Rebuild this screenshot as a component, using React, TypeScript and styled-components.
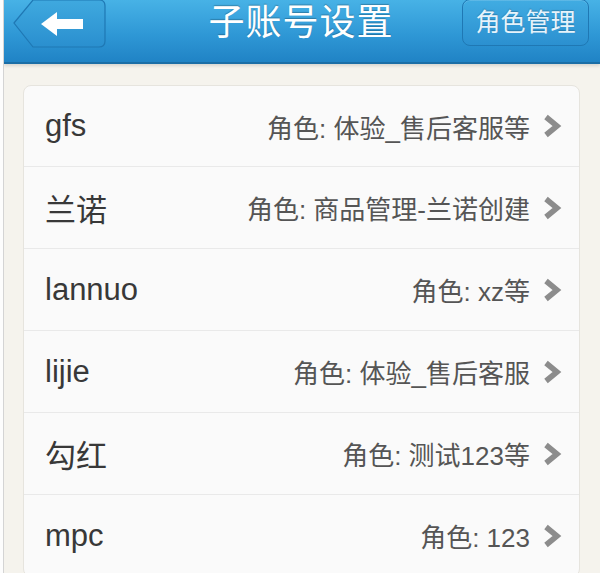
import React from 'react';
import styled, { createGlobalStyle } from 'styled-components';

const GlobalStyle = createGlobalStyle`
  html, body {
    margin: 0;
    padding: 0;
    background: #fdfdfd;
  }
  body {
    font-family: "Liberation Sans", Arial, "Noto Sans CJK SC", sans-serif;
  }
`;

const accounts = [
  { name: 'gfs', role: '角色: 体验_售后客服等' },
  { name: '兰诺', role: '角色: 商品管理-兰诺创建' },
  { name: 'lannuo', role: '角色: xz等' },
  { name: 'lijie', role: '角色: 体验_售后客服' },
  { name: '勾红', role: '角色: 测试123等' },
  { name: 'mpc', role: '角色: 123' },
];

function BackArrow() {
  return (
    <svg width='94' height='50' viewBox='0 0 94 50'>
      <defs>
        <linearGradient id='backFill' x1='0' y1='0' x2='0' y2='1'>
          <stop offset='0' stopColor='#3fa9df' />
          <stop offset='1' stopColor='#2a8fcf' />
        </linearGradient>
      </defs>
      <path
        d='M1 24 L20 1 L86 1 Q92 1 92 7 L92 42 Q92 48 86 48 L20 48 Z'
        fill='url(#backFill)'
        stroke='#1f78b4'
        strokeWidth='1.2'
      />
      <path d='M28 25 L44 13 L44 20 L70 20 L70 30 L44 30 L44 37 Z' fill='#ffffff' />
    </svg>
  );
}

function Chevron() {
  return (
    <svg width='20' height='24' viewBox='0 0 20 24'>
      <polyline
        points='4,3 15,12 4,21'
        fill='none'
        stroke='#8c8c8c'
        strokeWidth='5.5'
        strokeLinejoin='miter'
      />
    </svg>
  );
}

function App() {
  return (
    <Page>
      <GlobalStyle />
      <Header>
        <BackButton>
          <BackArrow />
        </BackButton>
        <Title>子账号设置</Title>
        <RoleButton>角色管理</RoleButton>
      </Header>
      <Content>
        <Card>
          {accounts.map((a) => (
            <Row key={a.name}>
              <Name>{a.name}</Name>
              <Role>{a.role}</Role>
              <Chevron />
            </Row>
          ))}
        </Card>
      </Content>
    </Page>
  );
}

export default App;

const Page = styled.div`
  margin-left: 3px;
  border-left: 1px solid #d4d4d4;
  height: 573px;
  overflow: hidden;
  background: #f5f3ed;
`;

const Header = styled.div`
  height: 62px;
  display: grid;
  grid-template-columns: 1fr auto 1fr;
  align-items: start;
  padding: 0 11px 0 9px;
  background: linear-gradient(to bottom, #47b2e6 0%, #2f98d6 55%, #2083c5 100%);
  border-bottom: 2px solid #1b6ea6;
  box-shadow: 0 2px 3px rgba(0, 0, 0, 0.12);
`;

const BackButton = styled.div`
  justify-self: start;
  width: 94px;
  height: 50px;
  margin-top: -1px;
`;

const Title = styled.div`
  color: #ffffff;
  font-size: 36px;
  line-height: 46px;
  letter-spacing: 1px;
  text-shadow: 0 -1px 1px rgba(0, 0, 0, 0.25);
`;

const RoleButton = styled.div`
  justify-self: end;
  width: 127px;
  height: 47px;
  margin-top: -1px;
  box-sizing: border-box;
  border: 1px solid #1f78b4;
  border-radius: 8px;
  background: linear-gradient(to bottom, #41ace2, #2b90d0);
  box-shadow: inset 0 1px 0 rgba(255, 255, 255, 0.15);
  color: #e6f3fb;
  font-size: 25px;
  line-height: 45px;
  text-align: center;
  text-shadow: 0 -1px 1px rgba(0, 0, 0, 0.2);
`;

const Content = styled.div`
  padding: 21px 20px 0 19px;
`;

const Card = styled.div`
  background: #fafafa;
  border: 1px solid #e6e4de;
  border-radius: 8px;
`;

const Row = styled.div`
  height: 81px;
  display: flex;
  align-items: center;
  padding: 0 17px 0 21px;
  border-top: 1px solid #e9e9e9;
  &:first-child {
    border-top: none;
    height: 80px;
  }
`;

const Name = styled.div`
  flex: 1;
  font-size: 31px;
  color: #383838;
`;

const Role = styled.div`
  font-size: 26px;
  color: #555555;
  margin-right: 12px;
`;
